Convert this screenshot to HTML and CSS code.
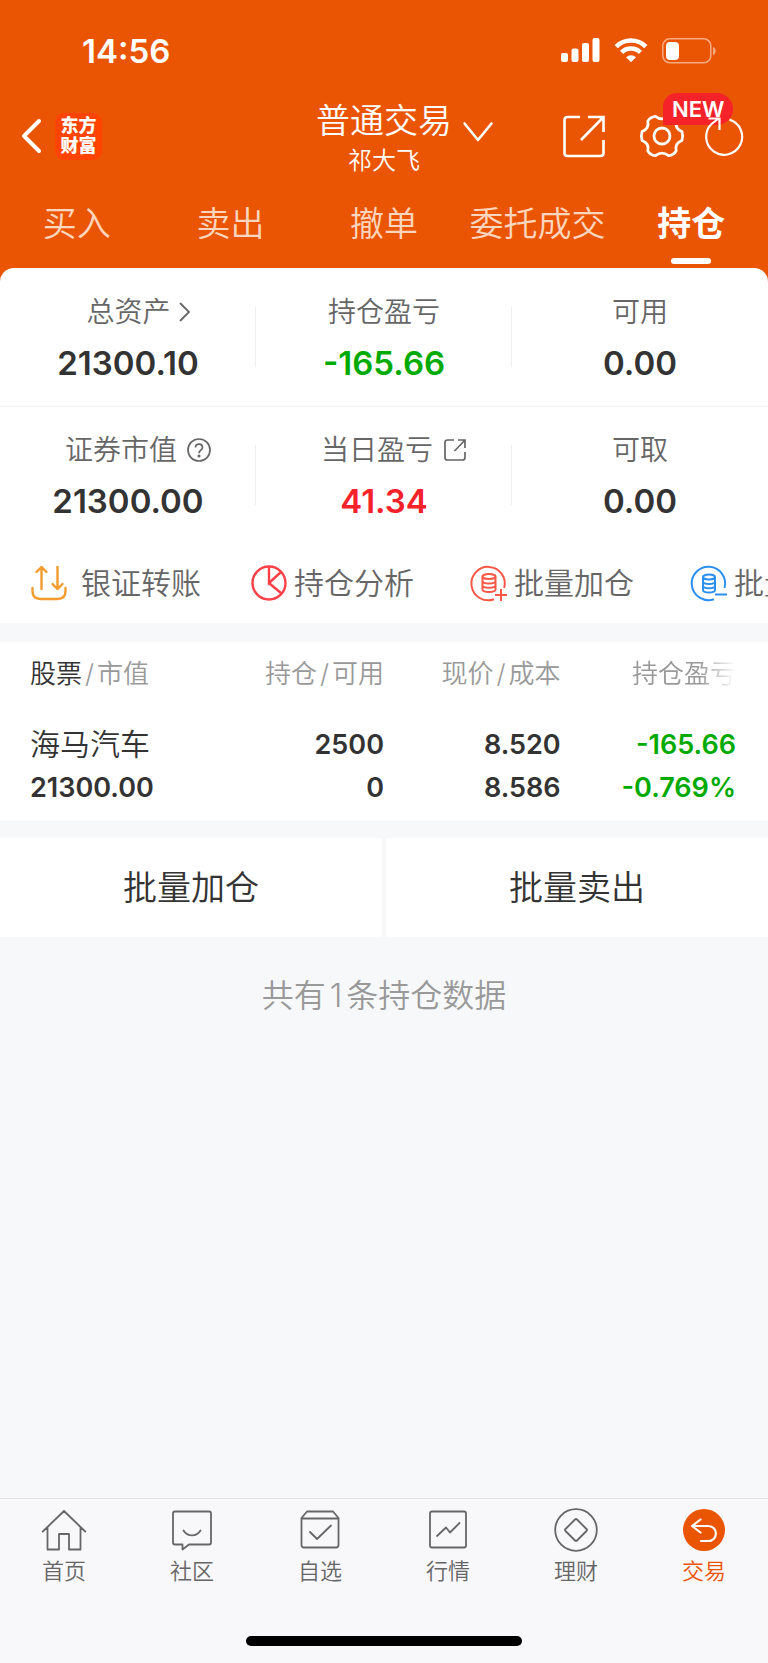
FILE: index.html
```html
<!DOCTYPE html>
<html lang="zh-CN">
<head>
<meta charset="utf-8">
<meta name="viewport" content="width=device-width, initial-scale=1">
<title>普通交易 - 持仓</title>
<link rel="stylesheet" href="styles.css">
</head>
<body>
<header class="header">
  <div class="status">
    <time class="status-time">14:56</time>
    <div class="status-icons">
      <svg width="39" height="25" viewBox="0 0 39 25" fill="#fff" aria-hidden="true">
        <rect x="0" y="15" width="7" height="9" rx="2"/><rect x="10.500" y="10.500" width="7" height="13.500" rx="2"/><rect x="21" y="5" width="7" height="19" rx="2"/><rect x="31.500" y="0" width="7" height="24" rx="2"/>
      </svg>
      <svg width="34" height="25" viewBox="0 0 34 25" fill="none" stroke="#fff" stroke-width="4.600" aria-hidden="true">
        <path d="M2.200 8.600a21 21 0 0 1 29.600 0"/><path d="M7.600 14.300a13.500 13.500 0 0 1 18.800 0"/><path d="M17 24.200l-5-5a7.200 7.200 0 0 1 10 0z" fill="#fff" stroke="none"/>
      </svg>
      <svg width="54" height="26" viewBox="0 0 54 26" aria-hidden="true">
        <rect x=".8" y=".8" width="48" height="24" rx="7" fill="none" stroke="#f5aa82" stroke-width="1.500"/>
        <rect x="4" y="4" width="13" height="18" rx="4" fill="#fff"/><path d="M51 9c3.500 1 3.500 7 0 8z" fill="#f5aa82"/>
      </svg>
    </div>
  </div>
  <div class="navbar">
    <div class="nav-left">
      <button class="icon-btn" type="button" aria-label="返回">
        <svg width="20" height="36" viewBox="0 0 20 36" fill="none" stroke="#fff" stroke-width="4" stroke-linecap="round" stroke-linejoin="round"><path d="M18 3L3 18l15 15"/></svg>
      </button>
      <div class="logo"><span>东方</span><span>财富</span></div>
    </div>
    <div class="nav-title">
      <h1 class="title">普通交易</h1>
      <p class="account">祁大飞</p>
    </div>
    <div class="nav-right">
      <button class="icon-btn chevron" type="button" aria-label="切换账户">
        <svg width="30" height="20" viewBox="0 0 30 20" fill="none" stroke="#fff" stroke-width="2.600" stroke-linecap="round" stroke-linejoin="round"><path d="M1.500 1.500L15 18 28.500 1.500"/></svg>
      </button>
      <button class="icon-btn" type="button" aria-label="分享">
        <svg width="42" height="44" viewBox="0 0 42 44" fill="none" stroke="#fff" stroke-width="2.600"><path d="M17 3H4.500Q1.500 3 1.500 6v33q0 3 3 3h33q3 0 3-3V26M25 3h15.500v15M40.500 3L18 26"/></svg>
      </button>
      <button class="icon-btn gear" type="button" aria-label="设置">
        <svg width="44" height="44" viewBox="-22 -22 44 44" fill="none" stroke="#fff" stroke-width="2.800" stroke-linejoin="round"><path d="M19.900 -4.500Q21.500 0 19.900 4.500Q12.600 7.250 14.200 14.800Q12 19 6.500 19.700Q0 14.500 -6.500 19.700Q-12 19 -14.200 14.800Q-12.600 7.250 -19.900 4.500Q-21.500 0 -19.900 -4.500Q-12.600 -7.250 -14.200 -14.800Q-12 -19 -6.500 -19.700Q0 -14.500 6.500 -19.700Q12 -19 14.200 -14.800Q12.600 -7.250 19.900 -4.500Z"/><circle r="8"/></svg>
        <span class="badge">NEW</span>
      </button>
      <button class="icon-btn refresh" type="button" aria-label="刷新">
        <svg width="40" height="42" viewBox="0 0 40 42" fill="none" stroke="#fff" stroke-width="2.200"><path d="M25.500 4.600A18 18 0 1 1 7.500 9L14 4M4.500 3.500H15.500V15"/></svg>
      </button>
    </div>
  </div>
  <nav class="tabs">
    <a href="#buy">买入</a><a href="#sell">卖出</a><a href="#cancel">撤单</a><a href="#orders">委托成交</a><a href="#positions" class="active" aria-current="page">持仓</a>
  </nav>
</header>

<main class="main">
  <section class="summary">
    <dl class="stats">
      <div class="stat"><dt class="with-icon">总资产<svg class="arrow" width="11" height="20" viewBox="0 0 11 20" fill="none" stroke="#666" stroke-width="1.800"><path d="M1 1l9 9-9 9"/></svg></dt><dd>21300.10</dd></div>
      <div class="stat"><dt>持仓盈亏</dt><dd class="down">-165.66</dd></div>
      <div class="stat"><dt>可用</dt><dd>0.00</dd></div>
    </dl>
    <dl class="stats">
      <div class="stat"><dt class="with-icon">证券市值<svg width="24" height="24" viewBox="0 0 24 24" fill="none" stroke="#666" stroke-width="1.700"><circle cx="12" cy="12" r="11"/><path d="M8.500 9.500c0-4.500 7-4.500 7 0 0 2.600-3.500 2.800-3.500 5.700"/><circle cx="12" cy="18" r=".7" fill="#666"/></svg></dt><dd>21300.00</dd></div>
      <div class="stat"><dt class="with-icon">当日盈亏<svg width="24" height="24" viewBox="0 0 24 24" fill="none" stroke="#666" stroke-width="1.700"><path d="M11 2H4.500Q2 2 2 4.500v15Q2 22 4.500 22h15q2.500 0 2.500-2.500V14M15 2h7v8M22 2L11.500 13"/></svg></dt><dd class="up">41.34</dd></div>
      <div class="stat"><dt>可取</dt><dd>0.00</dd></div>
    </dl>
    <div class="actions">
      <button class="action action-wide" type="button">
        <svg width="36" height="36" viewBox="0 0 36 36" fill="none" stroke="#f39b2d" stroke-width="2.400" stroke-linecap="round" stroke-linejoin="round"><path d="M1.500 23v3q0 8 8 8h17q8 0 8-8v-3M10.500 24V2M5.500 7l5-5 5 5M26.500 2v22M21.500 19l5 5 5-5"/></svg>
        银证转账</button>
      <button class="action" type="button">
        <svg width="36" height="36" viewBox="0 0 36 36" fill="none" stroke="#fb4147" stroke-width="2.400"><circle cx="18" cy="18" r="16.500"/><path d="M18 1.500V18L30 7M18 18l12.500 10.500"/></svg>
        持仓分析</button>
      <button class="action" type="button">
        <svg width="36" height="36" viewBox="0 0 36 36" fill="none" stroke="#fa5746" stroke-width="2"><path d="M33.200 23A16.700 16.700 0 1 0 23 34.200"/><ellipse cx="18" cy="11.500" rx="6.500" ry="2.500"/><path d="M11.500 11.500v13c0 3.300 13 3.300 13 0v-13M11.500 16c0 3.300 13 3.300 13 0M11.500 20.300c0 3.300 13 3.300 13 0M24 30h12M30 24v12"/></svg>
        批量加仓</button>
      <button class="action" type="button">
        <svg width="36" height="36" viewBox="0 0 36 36" fill="none" stroke="#2b8ff0" stroke-width="2"><path d="M33.500 23A16.700 16.700 0 1 0 23 34.200"/><ellipse cx="18" cy="12" rx="6" ry="2.500"/><path d="M12 12v13c0 3.300 12 3.300 12 0V12M12 16.500c0 3.300 12 3.300 12 0M12 20.800c0 3.300 12 3.300 12 0M24 29.500h12"/></svg>
        批量卖出</button>
    </div>
  </section>

  <section class="positions">
    <table class="table">
      <thead>
        <tr><th scope="col"><b>股票</b><i>/</i>市值</th><th scope="col">持仓<i>/</i>可用</th><th scope="col">现价<i>/</i>成本</th><th scope="col"><span class="fade">持仓盈亏</span></th></tr>
      </thead>
      <tbody>
        <tr><td class="name">海马汽车</td><td>2500</td><td>8.520</td><td class="down">-165.66</td></tr>
        <tr><td>21300.00</td><td>0</td><td>8.586</td><td class="down">-0.769%</td></tr>
      </tbody>
    </table>
  </section>

  <div class="batch">
    <button type="button">批量加仓</button>
    <button type="button">批量卖出</button>
  </div>
  <p class="count">共有<span class="count-number">1</span>条持仓数据</p>
</main>

<footer class="footer">
  <nav class="tabbar">
    <a href="#home"><svg width="44" height="44" viewBox="0 0 44 44"><path d="M.8 22.500L22 2l21.200 20.500M5.500 18.500V40.500H17V25H27V40.500H38.500V18.500"/></svg>首页</a>
    <a href="#community"><svg width="44" height="44" viewBox="0 0 44 44"><path d="M5 2.500h34q2 0 2 2V33.500q0 2-2 2H19L12.500 40.500V35.500H5q-2 0-2-2V4.500q0-2 2-2zM13.500 21.500c4 6.500 13 6.500 17 0"/></svg>社区</a>
    <a href="#watchlist"><svg width="44" height="44" viewBox="0 0 44 44"><path d="M9 2.500h26l5.500 6.500V36q0 2.500-2.500 2.500H6Q3.500 38.500 3.500 36V9zM3.500 9.500h37M12 23l7 7L33 16.500"/></svg>自选</a>
    <a href="#market"><svg width="44" height="44" viewBox="0 0 44 44"><path d="M6 2.500h32q2 0 2 2v32q0 2-2 2H6q-2 0-2-2v-32q0-2 2-2zM11 27l9-8.500 4 5L33.500 14"/></svg>行情</a>
    <a href="#wealth"><svg width="44" height="44" viewBox="0 0 44 44"><circle cx="22" cy="21" r="20.800"/><path d="M21 10.500q1-1 2 0L32.500 20q1 1 0 2L23 31.500q-1 1-2 0L11.500 22q-1-1 0-2z"/></svg>理财</a>
    <a href="#trade" class="active" aria-current="page"><svg width="44" height="44" viewBox="0 0 44 44"><circle cx="22" cy="21" r="21" class="disc"/><path class="back" d="M18.500 10.500L10 17l8.500 6.500M10 17H26c10.500 0 10.500 15 0 15h-7"/></svg>交易</a>
  </nav>
  <div class="home-indicator"></div>
</footer>
</body>
</html>
```
FILE: styles.css
```css
* {
  box-sizing: border-box;
}

body {
  margin: 0;
  min-height: 100vh;
  display: flex;
  flex-direction: column;
  background: #f7f8fa;
  color: #333;
  font-family: Inter, "Noto Sans CJK SC", sans-serif;
  font-weight: 350;
}

button {
  margin: 0;
  padding: 0;
  border: 0;
  background: none;
  color: inherit;
  font: inherit;
}

a {
  color: inherit;
  text-decoration: none;
}

svg {
  display: block;
  flex: none;
  overflow: visible;
}

/* Header */
.header {
  background: #ea5504;
  color: #fff;
  padding-bottom: 16px;
  margin-bottom: -16px;
}

.status {
  display: flex;
  justify-content: space-between;
  align-items: center;
  height: 92px;
  padding: 10px 52px 0 82px;
}

.status-time {
  font-size: 33px;
  font-weight: 600;
}

.status-icons {
  display: flex;
  gap: 14px;
}

.navbar {
  display: grid;
  grid-template-columns: 1fr auto 1fr;
  height: 92px;
}

.nav-left,
.nav-right {
  display: flex;
  align-items: center;
  padding-bottom: 4px;
}

.nav-left {
  gap: 14px;
  padding-left: 21px;
}

.nav-right {
  padding-left: 11px;
  padding-right: 24px;
}

.logo {
  display: flex;
  flex-direction: column;
  align-items: center;
  justify-content: center;
  width: 47px;
  height: 47px;
  border-radius: 9px;
  background: #ff4301;
  font-size: 18px;
  line-height: 20px;
  font-weight: 900;
}

.nav-title {
  text-align: center;
}

.title {
  margin: 0;
  padding-top: 6px;
  font-size: 34px;
  line-height: 46px;
  font-weight: 350;
}

.account {
  margin: 0;
  font-size: 24px;
  line-height: 34px;
}

.chevron {
  margin-right: auto;
  padding-bottom: 8px;
}

.gear {
  position: relative;
  margin-left: 35px;
}

.badge {
  position: absolute;
  left: 23px;
  top: -21px;
  padding: 0 9px;
  border-radius: 14px 16px 16px 0;
  background: #f5222a;
  font-size: 22px;
  line-height: 32px;
  font-weight: 600;
}

.refresh {
  position: relative;
  margin-left: 20px;
}

.tabs {
  display: grid;
  grid-template-columns: repeat(5, 1fr);
  height: 84px;
  font-size: 34px;
  line-height: 80px;
  text-align: center;
  color: #fcd5bf;
}

.tabs a {
  display: flex;
  flex-direction: column;
  align-items: center;
}

.tabs .active {
  color: #fff;
  font-weight: 700;
}

.tabs .active::after {
  content: "";
  width: 40px;
  height: 6px;
  border-radius: 3px;
  background: #fff;
  margin-top: -6px;
}

/* Asset summary */
.main {
  flex: 1;
}

.summary {
  border-radius: 14px 14px 0 0;
  background: #fff;
}

.stats {
  display: grid;
  grid-template-columns: repeat(3, 1fr);
  margin: 0;
  padding: 24px 0 12px;
}

.stats + .stats {
  border-top: 1px solid #f0f0f2;
  padding: 23px 0 13px;
}

.stat {
  display: flex;
  flex-direction: column;
  align-items: center;
  background: linear-gradient(#f0f0f2, #f0f0f2) right 15px / 1px 60px no-repeat;
}

.stat:last-child {
  background: none;
}

.stat dt {
  display: flex;
  align-items: center;
  gap: 10px;
  font-size: 28px;
  line-height: 40px;
  color: #666;
}

.stat .with-icon {
  padding-left: 20px;
}

.stat .arrow {
  margin-left: -2px;
}

.stat dd {
  margin: 0;
  font-size: 33px;
  line-height: 62px;
  font-weight: 600;
}

.down,
.stat .down,
.table .down {
  color: #0a0;
}

.stat .up {
  color: #f5222a;
}

.actions {
  display: flex;
  overflow: hidden;
  padding: 16px 0 18px 31px;
}

.action {
  display: flex;
  flex: none;
  align-items: center;
  gap: 7px;
  width: 220px;
  font-size: 30px;
  line-height: 44px;
  color: #666;
  white-space: nowrap;
}

.action-wide {
  gap: 14px;
}

/* Positions */
.positions {
  margin-top: 19px;
  background: #fff;
  padding: 12px 0 12px;
}

.table {
  width: 100%;
  table-layout: fixed;
  border-collapse: collapse;
}

.table th,
.table td {
  padding: 0;
  text-align: right;
}

.table th {
  width: 23%;
  padding-bottom: 29px;
  font-size: 26px;
  line-height: 40px;
  font-weight: 350;
  color: #999;
}

.table th b {
  color: #333;
  font-weight: 350;
}

.table th i {
  padding: 0 3px;
  font-style: normal;
}

.table th:first-child,
.table td:first-child {
  width: 27%;
  padding-left: 30px;
  text-align: left;
}

.table th:last-child,
.table td:last-child {
  width: 27%;
  padding-right: 32px;
}

.table td {
  font-size: 27px;
  line-height: 43px;
  font-weight: 600;
}

.table td.name {
  font-size: 30px;
  font-weight: 350;
}

.fade {
  -webkit-mask-image: linear-gradient(90deg, #000 65%, transparent);
  mask-image: linear-gradient(90deg, #000 65%, transparent);
}

.batch {
  display: grid;
  grid-template-columns: 1fr 1fr;
  gap: 4px;
  margin-top: 17px;
}

.batch button {
  background: #fff;
  font-size: 34px;
  line-height: 99px;
}

.count {
  margin: 36px 0;
  text-align: center;
  font-size: 32px;
  line-height: 46px;
  color: #999;
}

.count-number {
  padding: 0 4px;
}

/* Bottom bar */
.footer {
  border-top: 1px solid #e2e2e5;
  background: #f8f8fb;
  padding: 10px 0 17px;
}

.tabbar {
  display: grid;
  grid-template-columns: repeat(6, 1fr);
  color: #666;
  font-size: 22px;
  line-height: 36px;
}

.tabbar a {
  display: flex;
  flex-direction: column;
  align-items: center;
}

.tabbar svg {
  fill: none;
  stroke: #666;
  stroke-width: 1.8;
  stroke-linecap: round;
  stroke-linejoin: round;
}

.tabbar .active {
  color: #ea5504;
}

.tabbar .disc {
  fill: #ea5504;
  stroke: none;
}

.tabbar .back {
  stroke: #fff;
  stroke-width: 2.2;
}

.home-indicator {
  width: 36%;
  height: 10px;
  margin: 47px auto 0;
  border-radius: 5px;
  background: #000;
}
```
